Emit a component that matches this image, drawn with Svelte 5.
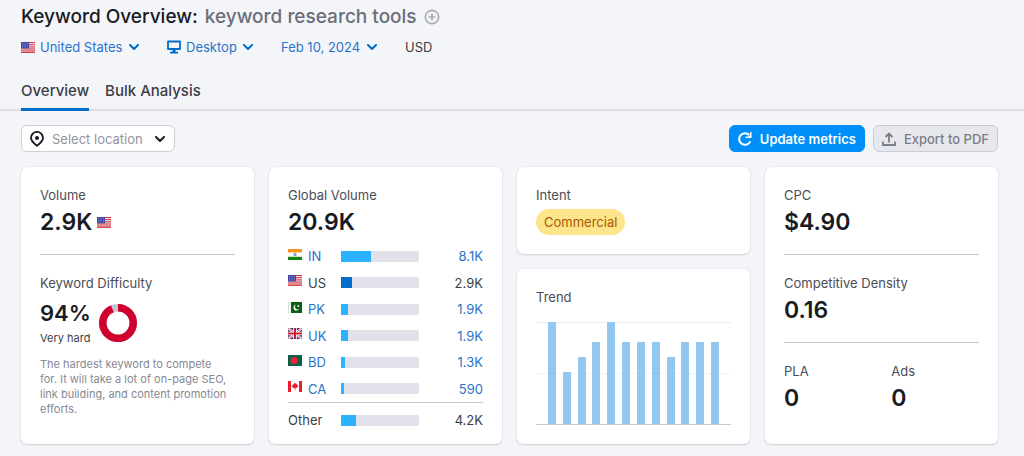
<script>
  let country = $state('us');
  let device = $state('desktop');
  let date = $state('2024-02-10');
  let location = $state('');
  let tab = $state('overview');

  const countries = [
    { code: 'IN', volume: '8.1K', share: 39 },
    { code: 'US', volume: '2.9K', share: 14, current: true },
    { code: 'PK', volume: '1.9K', share: 9 },
    { code: 'UK', volume: '1.9K', share: 9 },
    { code: 'BD', volume: '1.3K', share: 6 },
    { code: 'CA', volume: '590', share: 4 },
  ];

  const trend = [100, 51, 66, 80, 100, 80, 80, 80, 66, 80, 80, 80];
</script>

{#snippet chevron()}
  <svg class="chevron" viewBox="0 0 10 6" width="10" height="6" aria-hidden="true">
    <path d="M1 1l4 4 4-4" fill="none" stroke="currentColor" stroke-width="2" stroke-linecap="round" stroke-linejoin="round" />
  </svg>
{/snippet}

{#snippet flag(code)}
  <svg class="flag" viewBox="0 0 14 11" width="14" height="11" aria-hidden="true">
    {#if code === 'US'}
      <rect width="14" height="11" fill="#f3dadd" />
      <path d="M7 .5h7M7 2.7h7M7 4.9h7M0 7h14M0 9h14M0 10.6h14" stroke="#d0343f" stroke-width="1" />
      <rect width="8" height="6.4" fill="#4045a8" />
      <path d="M1 1.5h6M1 3.2h6M1 4.9h6" stroke="#9a9dd6" stroke-width=".8" stroke-dasharray=".8 .9" />
    {:else if code === 'IN'}
      <rect width="14" height="11" fill="#fff" />
      <rect width="14" height="3.4" fill="#f7941d" />
      <rect y="7.8" width="14" height="3.2" fill="#12830f" />
      <circle cx="7" cy="5.6" r="1.3" fill="#a9b3dd" stroke="#5b6bb8" stroke-width=".6" />
    {:else if code === 'PK'}
      <rect width="14" height="11" fill="#0b5e12" />
      <rect width="3" height="11" fill="#f1f4f1" />
      <path d="M.3 0v11" stroke="#b9cdb9" stroke-width=".6" />
      <path d="M8 2.600a3 3 0 1 0 3.200 4.200A2.600 2.600 0 0 1 8 2.600z" fill="#fff" />
      <path d="M10.200 2.600l.4.900.9.1-.7.700.2.900-.8-.5-.8.5.2-.9-.7-.7.9-.1z" fill="#fff" />
    {:else if code === 'UK'}
      <rect width="14" height="11" fill="#2b3a86" />
      <path d="M0 0l14 11M14 0L0 11" stroke="#fff" stroke-width="2.200" />
      <path d="M0 0l14 11M14 0L0 11" stroke="#d22f3c" stroke-width=".8" />
      <path d="M7 0v11M0 5.500h14" stroke="#fff" stroke-width="3.600" />
      <path d="M7 0v11M0 5.500h14" stroke="#cf1f2e" stroke-width="2" />
    {:else if code === 'BD'}
      <rect width="14" height="11" fill="#0b6049" />
      <circle cx="6" cy="5.500" r="3.500" fill="#ee2436" />
    {:else if code === 'CA'}
      <rect width="14" height="11" fill="#fff" />
      <rect width="3" height="11" fill="#ee1f2d" />
      <rect x="11" width="3" height="11" fill="#ee1f2d" />
      <path d="M7 1.500l1 1.600 1-.3-.1 1.500 1.500.2-.6 1.400-1.500 1.200h-.9V9h-.8V7.100h-.9L4.200 5.900l-.6-1.400 1.500-.2L5 2.800l1 .3z" fill="#ee1f2d" />
    {/if}
  </svg>
{/snippet}

<div class="page">
  <header>
    <h1>
      Keyword Overview: <span class="keyword">keyword research tools</span>
      <button class="add" aria-label="Add keyword to list">
        <svg viewBox="0 0 16 16" width="16" height="16" aria-hidden="true">
          <g fill="none" stroke="#a9abb6" stroke-width="1.700">
            <circle cx="8" cy="8" r="6.700" />
            <path d="M8 4.500v7M4.500 8h7" />
          </g>
        </svg>
      </button>
    </h1>

    <div class="filters">
      <div class="filter">
        {@render flag('US')}
        <select aria-label="Country" bind:value={country}>
          <option value="us">United States</option>
        </select>
        {@render chevron()}
      </div>
      <div class="filter">
        <svg viewBox="0 0 14 14" width="14" height="14" aria-hidden="true">
          <path d="M1 1.500h12v7.500H1z" fill="none" stroke="#006dca" stroke-width="1.800" stroke-linejoin="round" />
          <path d="M5.500 9.500h3v2.300H11v1.600H3v-1.600h2.500z" fill="#006dca" />
        </svg>
        <select aria-label="Device" bind:value={device}>
          <option value="desktop">Desktop</option>
        </select>
        {@render chevron()}
      </div>
      <div class="filter">
        <select aria-label="Date" bind:value={date}>
          <option value="2024-02-10">Feb 10, 2024</option>
        </select>
        {@render chevron()}
      </div>
      <span>USD</span>
    </div>

    <nav>
      <a href="#overview" class:active={tab === 'overview'} onclick={() => (tab = 'overview')}>Overview</a>
      <a href="#bulk" class:active={tab === 'bulk'} onclick={() => (tab = 'bulk')}>Bulk Analysis</a>
    </nav>
  </header>

  <main>
    <div class="toolbar">
      <div class="location">
        <svg viewBox="0 0 14 16" width="14" height="16" aria-hidden="true">
          <path d="M7 14.800C3.500 12 1 9.800 1 6.900a6 6 0 0 1 12 0c0 2.900-2.500 5.100-6 7.900z" fill="none" stroke="#191b23" stroke-width="1.900" stroke-linejoin="round" />
          <circle cx="7" cy="7" r="2" fill="#191b23" />
        </svg>
        <select aria-label="Location" bind:value={location}>
          <option value="">Select location</option>
        </select>
        {@render chevron()}
      </div>
      <div class="actions">
        <button class="btn primary">
          <svg viewBox="0 0 14 14" width="14" height="14" aria-hidden="true">
            <path d="M12.300 9.300A5.800 5.800 0 1 1 11.200 3" fill="none" stroke="#fff" stroke-width="2" />
            <path d="M13.500 0v6H7.500V4.400h3.100L12 3V0z" fill="#fff" />
          </svg>
          Update metrics
        </button>
        <button class="btn">
          <svg viewBox="0 0 14 14" width="14" height="14" aria-hidden="true">
            <path d="M1 9.500V13h12V9.500M7 10.500V2M3.500 5L7 1.500 10.500 5" fill="none" stroke="currentColor" stroke-width="1.800" />
          </svg>
          Export to PDF
        </button>
      </div>
    </div>

    <div class="cards">
      <section class="card">
        <div class="metric">
          <h2>Volume</h2>
          <div class="value">2.9K {@render flag('US')}</div>
        </div>
        <div class="metric">
          <h2>Keyword Difficulty</h2>
          <div class="difficulty">
            <div>
              <div class="value">94%</div>
              <div class="level">Very hard</div>
            </div>
            <svg viewBox="0 0 38 38" width="38" height="38" aria-hidden="true">
              <circle cx="19" cy="19" r="15.250" fill="none" stroke="#c4c7cf" stroke-width="7.500" />
              <circle cx="19" cy="19" r="15.250" fill="none" stroke="#d1002f" stroke-width="7.500" pathLength="100" stroke-dasharray="94 6" transform="rotate(-90 19 19)" />
            </svg>
          </div>
          <p>The hardest keyword to compete for. It will take a lot of on-page SEO, link building, and content promotion efforts.</p>
        </div>
      </section>

      <section class="card global">
        <h2>Global Volume</h2>
        <div class="value">20.9K</div>
        <table>
          <tbody>
            {#each countries as c}
              <tr class:current={c.current}>
                <th scope="row">
                  <span class="country">
                    {@render flag(c.code)}
                    {#if c.current}{c.code}{:else}<a href="#{c.code}">{c.code}</a>{/if}
                  </span>
                </th>
                <td><div class="track"><div class="fill" style="width: {c.share}%"></div></div></td>
                <td class="num">{#if c.current}{c.volume}{:else}<a href="#{c.code}">{c.volume}</a>{/if}</td>
              </tr>
            {/each}
          </tbody>
          <tfoot>
            <tr>
              <th scope="row">Other</th>
              <td><div class="track"><div class="fill" style="width: 20%"></div></div></td>
              <td class="num">4.2K</td>
            </tr>
          </tfoot>
        </table>
      </section>

      <div class="stack">
        <section class="card">
          <h2>Intent</h2>
          <span class="intent">Commercial</span>
        </section>
        <section class="card grow">
          <h2>Trend</h2>
          <div class="chart">
            {#each trend as t}
              <div class="bar" style="height: {t}%"></div>
            {/each}
          </div>
        </section>
      </div>

      <section class="card">
        <div class="metric">
          <h2>CPC</h2>
          <div class="value">$4.90</div>
        </div>
        <div class="metric">
          <h2>Competitive Density</h2>
          <div class="value">0.16</div>
        </div>
        <div class="metric split">
          <div>
            <h2>PLA</h2>
            <div class="value">0</div>
          </div>
          <div>
            <h2>Ads</h2>
            <div class="value">0</div>
          </div>
        </div>
      </section>
    </div>
  </main>
</div>

<style>
  :global(body) {
    margin: 0;
    background: #f4f5f9;
  }

  .page {
    font-family: Inter, "Liberation Sans", sans-serif;
    font-size: 13px;
    line-height: 20px;
    color: #3b3d45;
  }

  h1, h2, p {
    margin: 0;
    font-weight: 400;
  }

  svg {
    display: block;
    flex: none;
  }

  a {
    color: #2b72c9;
    text-decoration: none;
  }

  select, button {
    font: inherit;
    cursor: pointer;
  }

  select {
    appearance: none;
    border: none;
    background: transparent;
    color: inherit;
    padding: 0;
    margin: 0;
  }

  h1 {
    display: flex;
    align-items: center;
    gap: 7px;
    padding: 5px 21px 0;
    font-size: 19px;
    line-height: 24px;
    font-weight: 500;
    color: #191b23;
  }

  .keyword {
    color: #6c6e79;
  }

  .add {
    border: none;
    background: none;
    padding: 0;
  }

  .filters {
    display: flex;
    gap: 28px;
    padding: 8px 21px 0;
  }

  .filter {
    display: flex;
    align-items: center;
    gap: 5px;
    color: #2b72c9;
  }

  .filter .chevron {
    margin-left: 1px;
    color: #006dca;
  }

  .chevron {
    pointer-events: none;
  }

  nav {
    display: flex;
    gap: 16px;
    padding: 24px 21px 0;
    border-bottom: 2px solid #dcdde3;
    font-size: 15px;
    font-weight: 500;
  }

  nav a {
    color: #3b3d45;
    padding-bottom: 7px;
    margin-bottom: -2px;
    border-bottom: 3px solid transparent;
  }

  nav a.active {
    border-bottom-color: #006dca;
  }

  main {
    padding: 14px 26px 12px 21px;
  }

  .toolbar, .actions, .location, .btn {
    display: flex;
    align-items: center;
  }

  .toolbar {
    justify-content: space-between;
  }

  .location {
    box-sizing: border-box;
    height: 27px;
    gap: 8px;
    padding: 0 9px 0 8px;
    background: #fff;
    border: 1px solid #cdced6;
    border-radius: 6px;
    color: #191b23;
  }

  .location select {
    padding-right: 4px;
    color: #9294a0;
  }

  .actions {
    gap: 8px;
  }

  .btn {
    box-sizing: border-box;
    height: 27px;
    gap: 8px;
    padding: 0 8px;
    border: 1px solid #cbccd3;
    border-radius: 6px;
    background: #e7e8ed;
    color: #7b7d87;
    font-weight: 500;
  }

  .btn.primary {
    background: #008ff8;
    border-color: #008ff8;
    color: #fff;
    font-weight: 600;
  }

  .cards {
    display: grid;
    grid-template-columns: repeat(4, 1fr);
    gap: 15px;
    margin-top: 15px;
  }

  .card {
    padding: 18px 19px 19px;
    background: #fff;
    border-radius: 6px;
    box-shadow: 0 0 1px rgba(25, 27, 35, 0.2), 0 1px 2px rgba(25, 27, 35, 0.14);
  }

  .global {
    padding-bottom: 7px;
  }

  .stack {
    display: flex;
    flex-direction: column;
    gap: 15px;
  }

  .grow {
    flex: 1;
    display: flex;
    flex-direction: column;
  }

  .metric + .metric {
    margin-top: 16px;
    padding-top: 18px;
    border-top: 1px solid #c7c8d2;
  }

  h2 {
    font-size: 13px;
    line-height: 20px;
    color: #4b4d55;
  }

  .value {
    display: flex;
    align-items: center;
    gap: 5px;
    margin-top: 2px;
    font-size: 23px;
    line-height: 31px;
    font-weight: 600;
    color: #191b23;
  }

  .difficulty {
    display: flex;
    align-items: center;
    gap: 8px;
    margin-top: 5px;
  }

  .difficulty .value {
    margin-top: 0;
    font-size: 22px;
  }

  .level {
    font-size: 11px;
    line-height: 18px;
  }

  p {
    margin-top: 10px;
    padding-right: 6px;
    font-size: 11px;
    line-height: 15px;
    color: #868892;
  }

  table {
    width: 100%;
    margin-top: 5px;
    border-collapse: collapse;
    table-layout: fixed;
  }

  th, td {
    height: 26px;
    padding: 0;
    font-weight: 400;
    text-align: left;
  }

  tr:nth-child(even) td {
    height: 27px;
  }

  th {
    width: 27%;
  }

  .num {
    width: 33%;
    text-align: right;
  }

  tfoot th, tfoot td {
    height: 34px;
    border-top: 1px solid #c7c8d2;
  }

  .country {
    display: flex;
    align-items: center;
    gap: 6px;
  }

  .country .flag {
    margin-bottom: 4px;
  }

  .track {
    height: 11px;
    overflow: hidden;
    background: #e0e1e9;
    border-radius: 0 2px 2px 0;
  }

  .fill {
    height: 100%;
    background: #2bb3ff;
  }

  .current .fill {
    background: #006dca;
  }

  .intent {
    display: inline-block;
    margin-top: 4px;
    padding: 3px 8px;
    border-radius: 14px;
    background: #fde58b;
    color: #a75800;
  }

  .chart {
    flex: 1;
    display: flex;
    align-items: flex-end;
    justify-content: space-between;
    margin-top: 15px;
    padding: 0 12px;
    border-bottom: 1px solid #c7c8d2;
    background:
      linear-gradient(#ededf1, #ededf1) 0 0 / 100% 1px no-repeat,
      linear-gradient(#f3f3f6, #f3f3f6) 0 50% / 100% 1px no-repeat;
  }

  .bar {
    width: 8px;
    background: #92c7ef;
    border-radius: 1px 1px 0 0;
  }

  .split {
    display: grid;
    grid-template-columns: 55% 45%;
  }
</style>
